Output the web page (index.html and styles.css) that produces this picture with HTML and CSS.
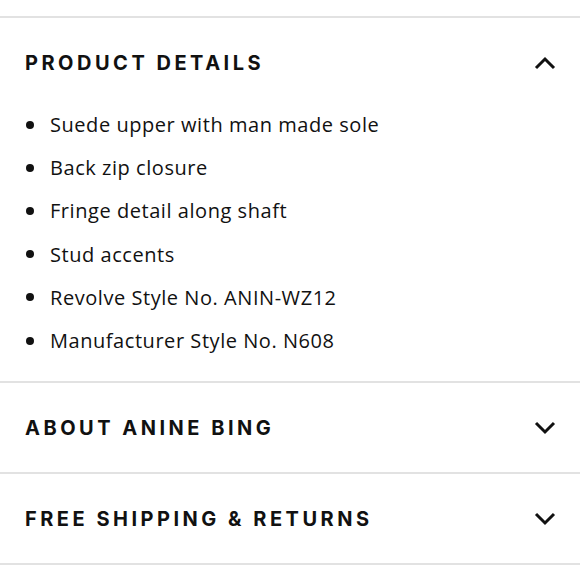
FILE: index.html
```html
<!DOCTYPE html>
<html>
<head>
<meta charset="utf-8">
<link rel="stylesheet" href="styles.css">
</head>
<body>
<div class="accordion">
  <section class="section section--open">
    <div class="header">
      <h2 class="title">PRODUCT DETAILS</h2>
      <svg class="chevron" width="22" height="14" viewBox="0 0 22 14"><path d="M2 12 L11 3 L20 12" fill="none" stroke="#111" stroke-width="3"/></svg>
    </div>
    <ul class="list">
      <li>Suede upper with man made sole</li>
      <li>Back zip closure</li>
      <li>Fringe detail along shaft</li>
      <li>Stud accents</li>
      <li>Revolve Style No. ANIN-WZ12</li>
      <li>Manufacturer Style No. N608</li>
    </ul>
  </section>
  <section class="section">
    <div class="header">
      <h2 class="title">ABOUT ANINE BING</h2>
      <svg class="chevron" width="22" height="14" viewBox="0 0 22 14"><path d="M2 2 L11 11 L20 2" fill="none" stroke="#111" stroke-width="3"/></svg>
    </div>
  </section>
  <section class="section">
    <div class="header">
      <h2 class="title">FREE SHIPPING &amp; RETURNS</h2>
      <svg class="chevron" width="22" height="14" viewBox="0 0 22 14"><path d="M2 2 L11 11 L20 2" fill="none" stroke="#111" stroke-width="3"/></svg>
    </div>
  </section>
</div>
</body>
</html>
```
FILE: styles.css
```css
html, body {
  margin: 0;
  padding: 0;
  background: #fff;
}
body {
  font-family: "Open Sans", "Liberation Sans", sans-serif;
  color: #111;
}
.accordion {
  padding-top: 16px;
}
.section {
  border-top: 2px solid #e2e2e2;
}
.section:last-child {
  border-bottom: 2px solid #e2e2e2;
}
.header {
  height: 89px;
  display: flex;
  align-items: center;
  justify-content: space-between;
  padding: 0 24px 0 25px;
}
.title {
  margin: 0;
  font-family: "Inter", "Liberation Sans", sans-serif;
  font-weight: 700;
  font-size: 20px;
  letter-spacing: 3.5px;
}
.chevron {
  display: block;
}
.list {
  list-style: none;
  margin: -4px 0 0;
  padding: 0 25px 19px 25px;
}
.list li {
  display: flex;
  align-items: center;
  height: 43.2px;
  font-size: 20px;
  letter-spacing: 0.55px;
}
.list li::before {
  content: "";
  width: 8px;
  height: 8px;
  border-radius: 50%;
  background: #111;
  margin: 0 16px 0 1px;
  flex: none;
}
```
